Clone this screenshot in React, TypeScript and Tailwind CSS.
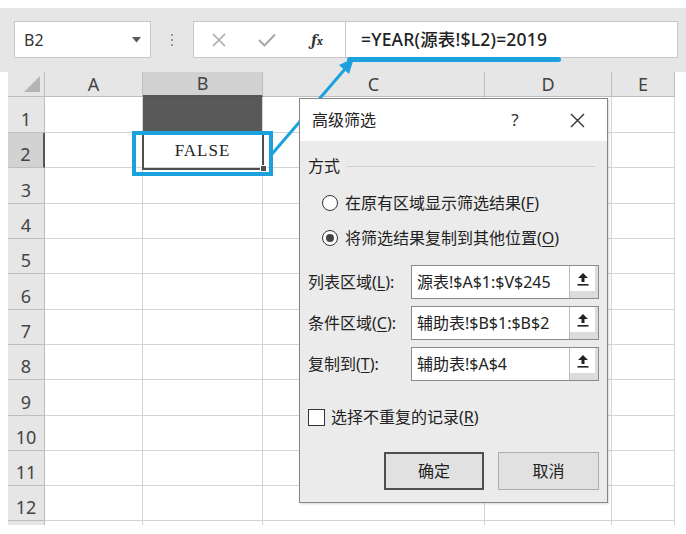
import React from "react";

const cjk = "font-[Noto_Sans,Noto_Sans_CJK_SC,sans-serif]";

const cols = [
  { key: "A", w: "w-[98px]" },
  { key: "B", w: "w-[120px]" },
  { key: "C", w: "w-[222px]" },
  { key: "D", w: "w-[127px]" },
  { key: "E", w: "w-[63px]" },
];

const rowHeights = [
  "h-[36px]",
  "h-[35px]",
  "h-[36px]",
  "h-[35px]",
  "h-[35px]",
  "h-[36px]",
  "h-[35px]",
  "h-[35px]",
  "h-[36px]",
  "h-[35px]",
  "h-[35px]",
  "h-[35px]",
];

function Toolbar() {
  return (
    <div className="h-[64px] bg-[#e6e6e6] flex items-start pt-[13px]">
      <div className="ml-[14px] w-[137px] h-[37px] bg-white border border-[#c8c8c8] flex items-center justify-between pl-[9px] pr-[9px]">
        <span className="text-[16px] text-[#333]">B2</span>
        <svg width="9" height="6" viewBox="0 0 9 6">
          <path d="M0 0 L9 0 L4.5 5.5 Z" fill="#5a5a5a" />
        </svg>
      </div>
      <div className="w-[42px] h-[37px] flex flex-col items-center justify-center gap-[3px]">
        <span className="w-[2px] h-[2px] bg-[#9a9a9a]" />
        <span className="w-[2px] h-[2px] bg-[#9a9a9a]" />
        <span className="w-[2px] h-[2px] bg-[#9a9a9a]" />
      </div>
      <div className="w-[153px] h-[37px] bg-white border border-[#c8c8c8] flex items-center">
        <div className="w-[50px] flex justify-center">
          <svg width="14" height="14" viewBox="0 0 14 14">
            <path d="M1 1 L13 13 M13 1 L1 13" stroke="#a8a8a8" strokeWidth="1.6" />
          </svg>
        </div>
        <div className="w-[46px] flex justify-center">
          <svg width="18" height="14" viewBox="0 0 18 14">
            <path d="M1 7 L6.5 12.5 L17 1.5" stroke="#a8a8a8" strokeWidth="2" fill="none" />
          </svg>
        </div>
        <div className="w-[54px] flex justify-center">
          <span className="font-serif italic font-bold text-[17px] text-[#333]">
            f<span className="text-[12px]">x</span>
          </span>
        </div>
      </div>
      <div className={`w-[332px] h-[37px] bg-white border border-l-0 border-[#c8c8c8] flex items-center pl-[15px] ${cjk}`}>
        <span className="text-[17.5px] font-medium text-[#222] tracking-[0.2px]">=YEAR(源表!$L2)=2019</span>
      </div>
    </div>
  );
}

function Grid() {
  return (
    <div className="pl-[8px]">
      <div className="flex h-[25px]">
        <div className="w-[37px] bg-[#e6e6e6] border-r border-b border-[#bdbdbd] relative">
          <svg className="absolute right-[4px] bottom-[4px]" width="16" height="16" viewBox="0 0 16 16">
            <path d="M16 0 L16 16 L0 16 Z" fill="#b4b4b4" />
          </svg>
        </div>
        {cols.map((c) => (
          <div
            key={c.key}
            className={`${c.w} border-r border-[#bdbdbd] flex items-center justify-center text-[18px] text-[#444] ${
              c.key === "B" ? "bg-[#d2d2d2] border-b-2 border-b-[#555]" : "bg-[#e6e6e6] border-b"
            }`}
          >
            {c.key}
          </div>
        ))}
      </div>
      {rowHeights.map((h, i) => (
        <div key={i} className={`flex ${h}`}>
          <div
            className={`w-[37px] border-b border-[#bdbdbd] flex items-end justify-center pb-[1px] text-[18px] leading-[24px] text-[#444] ${
              i === 1 ? "bg-[#d2d2d2] border-r-2 border-r-[#555]" : "bg-[#e6e6e6] border-r"
            }`}
          >
            {i + 1}
          </div>
          {cols.map((c) => (
            <div
              key={c.key}
              className={`${c.w} border-r border-b border-[#d4d4d4] flex items-center justify-center ${
                i === 0 && c.key === "B" ? "bg-[#595959]" : "bg-white"
              }`}
            >
              {i === 1 && c.key === "B" ? (
                <span className="font-[Liberation_Serif,serif] text-[17px] tracking-[1px] text-[#222] pt-[2px]">
                  FALSE
                </span>
              ) : null}
            </div>
          ))}
        </div>
      ))}
      <div className="flex h-[4px]">
        <div className="w-[37px] bg-[#e6e6e6] border-r border-[#bdbdbd]" />
        {cols.map((c) => (
          <div key={c.key} className={`${c.w} border-r border-[#d4d4d4]`} />
        ))}
      </div>
    </div>
  );
}

function UploadIcon() {
  return (
    <svg width="12" height="14" viewBox="0 0 12 14">
      <path d="M6 1 L11 6 L7.5 6 L7.5 10 L4.5 10 L4.5 6 L1 6 Z" fill="#222" />
      <rect x="0.5" y="12" width="11" height="1.6" fill="#222" />
    </svg>
  );
}

function RangeField({ label, hot, value }: { label: string; hot: string; value: string }) {
  const [pre, post] = label.split(hot);
  return (
    <div className="flex items-center h-[34px]">
      <div className="w-[103px] text-[16px] text-[#222]">
        {pre}
        <span className="underline underline-offset-2">{hot}</span>
        {post}
      </div>
      <div className="w-[188px] h-[34px] bg-white border border-[#8a8a8a] flex">
        <div className="flex-1 flex items-center pl-[5px] text-[16px] text-[#222]">{value}</div>
        <div className="w-[29px] border-l border-[#bcbcbc] bg-[#dcdcdc] flex flex-col">
          <div className="h-[25px] mr-[3px] bg-white flex items-center justify-center">
            <UploadIcon />
          </div>
        </div>
      </div>
    </div>
  );
}

function Radio({ checked, children }: { checked?: boolean; children: React.ReactNode }) {
  return (
    <div className="flex items-center h-[20px] pl-[22px] gap-[7px]">
      <span className="w-[16px] h-[16px] rounded-full border border-[#333] bg-white flex items-center justify-center">
        {checked ? <span className="w-[8px] h-[8px] rounded-full bg-[#444]" /> : null}
      </span>
      <span className="text-[16px] text-[#222]">{children}</span>
    </div>
  );
}

function Dialog() {
  return (
    <div className={`absolute left-[299px] top-[98px] w-[309px] h-[405px] border border-[#858585] bg-[#ebebeb] shadow-[1px_1px_2px_rgba(0,0,0,0.15)] ${cjk}`}>
      <div className="h-[42px] bg-white flex items-center pl-[12px]">
        <span className="text-[16px] text-[#222]">高级筛选</span>
        <span className="flex-1" />
        <span className="w-[20px] text-center text-[17px] text-[#333]">?</span>
        <span className="w-[24px] ml-[40px] mr-[18px] flex justify-center">
          <svg width="15" height="15" viewBox="0 0 15 15">
            <path d="M1 1 L14 14 M14 1 L1 14" stroke="#333" strokeWidth="1.4" />
          </svg>
        </span>
      </div>
      <div className="pt-[15px] px-[8px]">
        <div className="flex items-center h-[20px] gap-[7px]">
          <span className="text-[16px] text-[#222]">方式</span>
          <span className="flex-1 h-px bg-[#cfcfcf] mr-[4px]" />
        </div>
        <div className="mt-[17px] -ml-[8px]">
          <Radio>
            在原有区域显示筛选结果(<span className="underline underline-offset-2">F</span>)
          </Radio>
        </div>
        <div className="mt-[15px] -ml-[8px]">
          <Radio checked>
            将筛选结果复制到其他位置(<span className="underline underline-offset-2">O</span>)
          </Radio>
        </div>
        <div className="mt-[17px] flex flex-col gap-[7px]">
          <RangeField label="列表区域(L):" hot="L" value="源表!$A$1:$V$245" />
          <RangeField label="条件区域(C):" hot="C" value="辅助表!$B$1:$B$2" />
          <RangeField label="复制到(T):" hot="T" value="辅助表!$A$4" />
        </div>
        <div className="mt-[26px] flex items-center h-[20px] gap-[6px]">
          <span className="w-[17px] h-[17px] bg-white border border-[#333]" />
          <span className="text-[16px] text-[#222]">
            选择不重复的记录(<span className="underline underline-offset-2">R</span>)
          </span>
        </div>
        <div className="mt-[25px] flex justify-end gap-[14px]">
          <button className="w-[100px] h-[38px] bg-[#e1e1e1] border-2 border-[#4f4f4f] text-[16px] text-[#222]">
            确定
          </button>
          <button className="w-[101px] h-[38px] bg-[#e1e1e1] border border-[#adadad] text-[16px] text-[#222]">
            取消
          </button>
        </div>
      </div>
    </div>
  );
}

export default function App() {
  return (
    <div className="w-[686px] h-[534px] bg-white relative overflow-hidden font-[Noto_Sans,sans-serif]">
      <div className="h-[8px]" />
      <Toolbar />
      <Grid />

      {/* active cell B2 */}
      <div className="absolute left-[142px] top-[132px] w-[122px] h-[38px] border-2 border-[#4f4f4f]" />
      <div className="absolute left-[260px] top-[165px] w-[7px] h-[7px] bg-[#4f4f4f] border border-white" />

      {/* annotations */}
      <div className="absolute left-[132px] top-[131px] w-[141px] h-[45px] border-4 border-[#1ba1dc]" />
      <div className="absolute left-[347px] top-[57px] w-[214px] h-[5px] rounded-full bg-[#1ba1dc]" />
      <svg className="absolute inset-0 pointer-events-none" width="686" height="534" viewBox="0 0 686 534">
        <line x1="272" y1="154" x2="345" y2="69" stroke="#1ba1dc" strokeWidth="3" />
        <polygon points="354,58 349,74 339,65" fill="#1ba1dc" />
      </svg>

      <Dialog />
    </div>
  );
}
